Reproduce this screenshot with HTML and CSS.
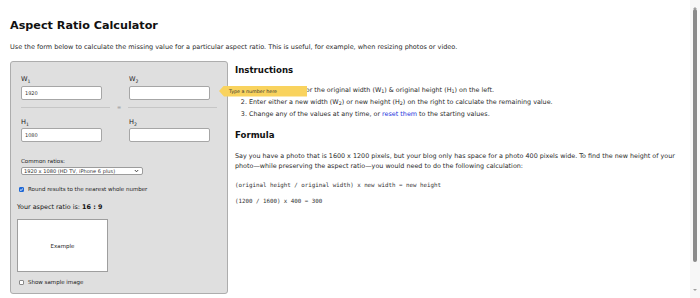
FILE: index.html
```html
<!DOCTYPE html>
<html lang="en">
<head>
<meta charset="utf-8">
<title>Aspect Ratio Calculator</title>
<link rel="stylesheet" href="styles.css">
</head>
<body>
<div class="page">
  <h1 class="title">Aspect Ratio Calculator</h1>
  <p class="intro">Use the form below to calculate the missing value for a particular aspect ratio. This is useful, for example, when resizing photos or video.</p>
  <div class="layout">
    <form class="calc">
      <div class="pair">
        <div class="field">
          <label class="flabel">W<sub>1</sub></label>
          <div class="input-wrap"><input class="num" type="text" value="1920"></div>
        </div>
        <div class="field">
          <label class="flabel">W<sub>2</sub></label>
          <div class="input-wrap">
            <input class="num" type="text" value="">
            <span class="tip">Type a number here</span>
          </div>
        </div>
      </div>
      <div class="equals"><span class="rule"></span><span class="eq">=</span><span class="rule"></span></div>
      <div class="pair pair-h">
        <div class="field">
          <label class="flabel">H<sub>1</sub></label>
          <div class="input-wrap"><input class="num" type="text" value="1080"></div>
        </div>
        <div class="field">
          <label class="flabel">H<sub>2</sub></label>
          <div class="input-wrap"><input class="num" type="text" value=""></div>
        </div>
      </div>
      <div class="ratios">
        <label class="rlabel">Common ratios:</label>
        <select class="rsel"><option>1920 x 1080 (HD TV, iPhone 6 plus)</option></select>
      </div>
      <label class="check check-round"><input type="checkbox" class="cb" checked><span>Round results to the nearest whole number</span></label>
      <div class="result">Your aspect ratio is: <b>16 : 9</b></div>
      <div class="example">Example</div>
      <label class="check check-sample"><input type="checkbox" class="cb"><span>Show sample image</span></label>
    </form>
    <div class="info">
      <h2 class="heading">Instructions</h2>
      <ol class="steps">
        <li>Enter the values for the original width (W<sub>1</sub>) &amp; original height (H<sub>1</sub>) on the left.</li>
        <li>Enter either a new width (W<sub>2</sub>) or new height (H<sub>2</sub>) on the right to calculate the remaining value.</li>
        <li>Change any of the values at any time, or <a class="link" href="#">reset them</a> to the starting values.</li>
      </ol>
      <h2 class="heading heading-formula">Formula</h2>
      <p class="text">Say you have a photo that is 1600 x 1200 pixels, but your blog only has space for a photo 400 pixels wide. To find the new height of your photo—while preserving the aspect ratio—you would need to do the following calculation:</p>
      <p class="code code-first">(original height / original width) x new width = new height</p>
      <p class="code">(1200 / 1600) x 400 = 300</p>
    </div>
  </div>
</div>
<div class="scrollbar" aria-hidden="true">
  <span class="sb-arrow sb-up"></span>
  <span class="sb-thumb"></span>
  <span class="sb-arrow sb-down"></span>
</div>
</body>
</html>
```

FILE: styles.css
```css
body {
  margin: 0;
  background: #ffffff;
  color: #2a2a2a;
  font-family: "DejaVu Sans", Verdana, sans-serif;
}
.page {
  padding: 0 20px 37px 10px;
}
.title {
  margin: 19px 0 0;
  font-size: 11.2px;
  line-height: 14px;
  font-weight: bold;
  color: #111;
}
.intro {
  margin: 9px 0 0;
  font-size: 6.5px;
  line-height: 10px;
}
.layout {
  margin-top: 9px;
  display: flex;
  align-items: flex-start;
  gap: 7px;
}

/* calculator panel */
.calc {
  flex: 0 0 218px;
  box-sizing: border-box;
  background: #dfdfdf;
  border: 1px solid #adadad;
  border-radius: 3px;
  padding: 13px 6px 6px;
  display: flex;
  flex-direction: column;
  align-items: flex-start;
}
.pair {
  margin-left: 4px;
  display: grid;
  grid-template-columns: 81px 81px;
  column-gap: 27px;
}
.pair-h {
  margin-top: 8px;
}
.field {
  display: flex;
  flex-direction: column;
}
.flabel {
  height: 9px;
  font-size: 6.6px;
  line-height: 9px;
  color: #222;
}
.flabel sub {
  font-size: 4.6px;
  line-height: 0;
  vertical-align: -1.5px;
}
.input-wrap {
  position: relative;
  margin-top: 1.5px;
}
.num {
  display: block;
  box-sizing: border-box;
  width: 81px;
  height: 14px;
  margin: 0;
  padding: 0 3px;
  border: 1px solid #a6a6a6;
  border-radius: 2px;
  background: #fff;
  font-family: "DejaVu Sans", Verdana, sans-serif;
  font-size: 5px;
  color: #333;
  outline: none;
}
.tip {
  position: absolute;
  left: calc(100% + 9px);
  top: 0;
  width: 88px;
  height: 11px;
  box-sizing: border-box;
  padding-left: 10px;
  background: #f9d35e;
  clip-path: polygon(0 50%, 5px 0, 100% 0, 100% 100%, 5px 100%);
  font-size: 4.8px;
  line-height: 11px;
  color: #333;
  white-space: nowrap;
  z-index: 2;
}
.equals {
  margin: 5px 0 0 4px;
  width: 196px;
  height: 5px;
  display: flex;
  align-items: center;
}
.rule {
  flex: 0 0 89px;
  height: 1px;
  background: #c6c6c6;
}
.eq {
  flex: 1;
  text-align: center;
  font-size: 5px;
  line-height: 5px;
  color: #888;
}
.ratios {
  margin: 14.5px 0 0 4px;
  display: flex;
  flex-direction: column;
  align-items: flex-start;
}
.rlabel {
  font-size: 5.5px;
  line-height: 8px;
  color: #222;
}
.rsel {
  margin-top: 2px;
  appearance: none;
  -webkit-appearance: none;
  box-sizing: border-box;
  width: 122px;
  height: 8px;
  padding: 0 0 0 2px;
  border: 1px solid #9c9c9c;
  border-radius: 2px;
  background: #fff url("data:image/svg+xml;utf8,<svg xmlns='http://www.w3.org/2000/svg' width='5' height='4'><path d='M0.8 1 L2.5 2.8 L4.2 1' fill='none' stroke='%23333' stroke-width='0.9'/></svg>") no-repeat right 3px center;
  font-family: "DejaVu Sans", Verdana, sans-serif;
  font-size: 5.1px;
  line-height: 6px;
  color: #333;
  outline: none;
}
.check {
  display: flex;
  align-items: center;
  gap: 4px;
  margin-left: 2px;
  font-size: 5.5px;
  line-height: 9px;
  color: #222;
}
.check-round {
  margin-top: 10px;
}
.check-sample {
  margin-top: 5.5px;
}
.cb {
  appearance: none;
  -webkit-appearance: none;
  margin: 0;
  width: 5px;
  height: 5px;
  box-sizing: border-box;
  border: 1px solid #8a8a8a;
  border-radius: 1px;
  background: #fff;
}
.cb:checked {
  border-color: #1f68d6;
  background: #1f68d6 url("data:image/svg+xml;utf8,<svg xmlns='http://www.w3.org/2000/svg' width='5' height='5'><path d='M1 2.6 L2.1 3.6 L4 1.3' fill='none' stroke='white' stroke-width='0.9'/></svg>") no-repeat center;
}
.result {
  margin-top: 8.5px;
  font-size: 6.4px;
  line-height: 10px;
  color: #111;
}
.result b {
  font-weight: bold;
}
.example {
  margin-top: 7px;
  box-sizing: border-box;
  width: 91px;
  height: 53px;
  border: 1px solid #9e9e9e;
  background: #fff;
  display: flex;
  align-items: center;
  justify-content: center;
  font-size: 5.5px;
  color: #222;
}

/* info column */
.info {
  flex: 1;
  min-width: 0;
  padding-top: 4px;
  font-size: 6.4px;
}
.heading {
  margin: 0;
  font-size: 8.6px;
  line-height: 11px;
  font-weight: bold;
  color: #111;
}
.heading-formula {
  margin-top: 10px;
}
.steps {
  margin: 8px 0 0;
  padding-left: 14px;
  line-height: 12px;
}
.steps sub {
  font-size: 4.8px;
  line-height: 0;
  vertical-align: -1.2px;
}
.link {
  color: #2233dd;
  text-decoration: none;
}
.text {
  margin: 10px 0 0;
  line-height: 10px;
}
.code {
  margin: 6px 0 0;
  font-family: "DejaVu Sans Mono", "Liberation Mono", monospace;
  font-size: 5.8px;
  line-height: 10px;
  color: #333;
}
.code-first {
  margin-top: 9px;
}

/* window scrollbar (drawn over the page edge) */
.scrollbar {
  position: fixed;
  top: 0;
  right: 0;
  width: 10px;
  height: 100vh;
  background: #f7f7f7;
  display: flex;
  flex-direction: column;
  align-items: center;
}
.sb-arrow {
  flex: 0 0 9px;
  width: 0;
  height: 0;
  box-sizing: border-box;
}
.sb-up {
  border-left: 2px solid transparent;
  border-right: 2px solid transparent;
  border-bottom: 2px solid #a0a0a0;
  border-top: 5px solid transparent;
}
.sb-thumb {
  flex: 0 0 253px;
  width: 4px;
  border-radius: 2px;
  background: #8a8a8a;
}
.sb-down {
  margin-top: auto;
  border-left: 2px solid transparent;
  border-right: 2px solid transparent;
  border-top: 2px solid #a0a0a0;
  border-bottom: 5px solid transparent;
}
```
